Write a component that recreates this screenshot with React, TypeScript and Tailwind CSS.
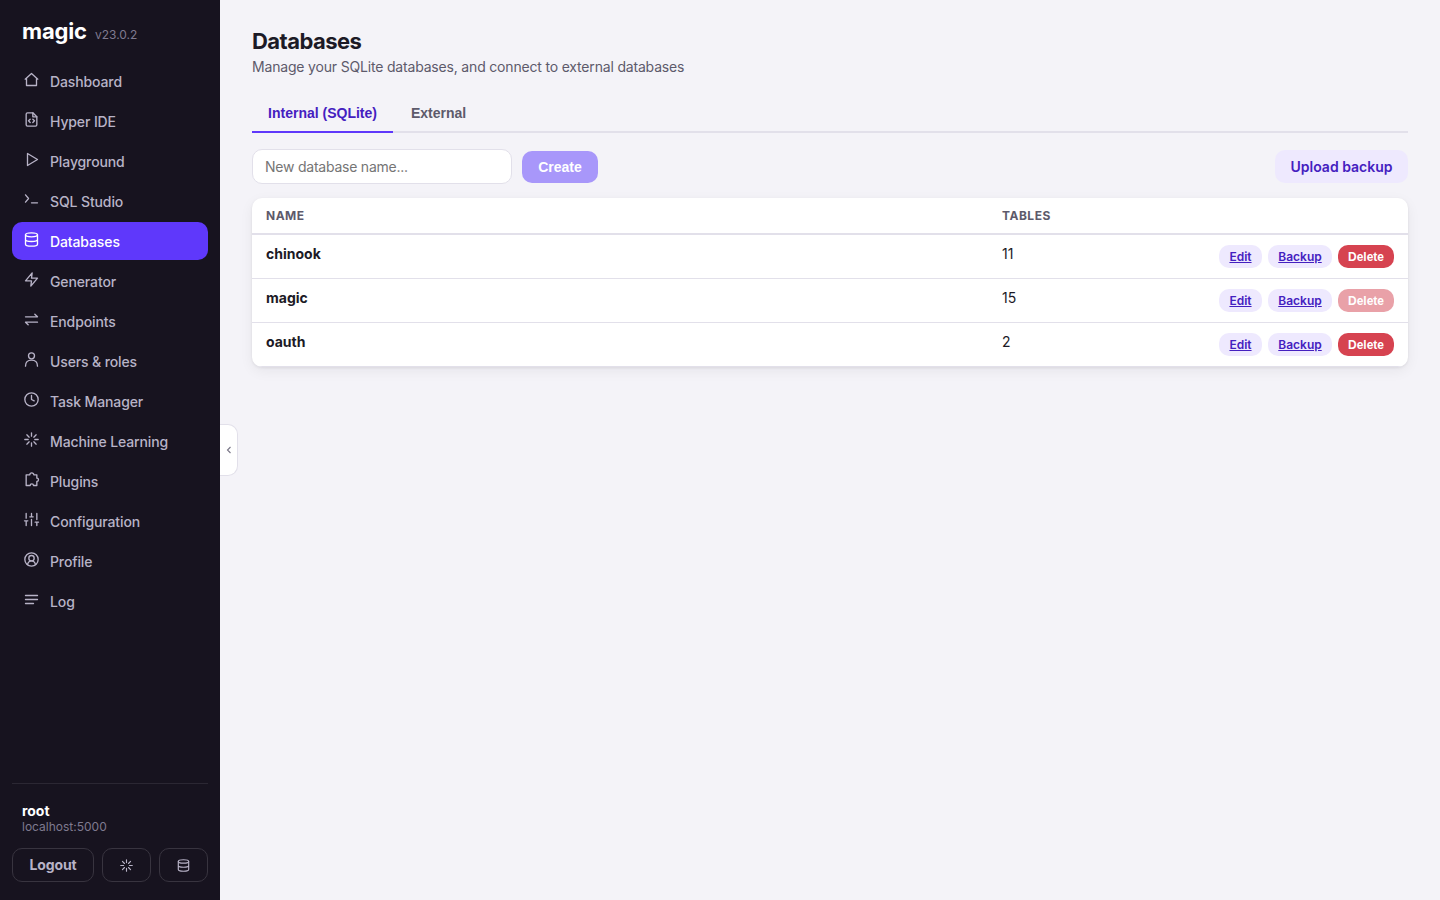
import React from 'react';
import clsx from 'clsx';

interface IconProps {
  name: string;
  size?: number;
}

const paths: Record<string, React.ReactNode> = {
  dashboard: <path d="M2.500 11.500 12 3l9.500 8.500M4.500 10v11h15V10" />,
  ide: (
    <>
      <path d="M14 2H6a2 2 0 0 0-2 2v16a2 2 0 0 0 2 2h12a2 2 0 0 0 2-2V8z" />
      <path d="M14 2v6h6M10 11.500l-2.500 2.500 2.500 2.500M14 11.500l2.500 2.500-2.500 2.500" />
    </>
  ),
  play: <path d="M6 3v18l15-9z" />,
  sql: <path d="m3 5 4.500 5.500L3 16M12 17h9" />,
  database: (
    <>
      <ellipse cx="12" cy="5" rx="9" ry="3" />
      <path d="M3 5v14c0 1.700 4 3 9 3s9-1.300 9-3V5M3 12c0 1.700 4 3 9 3s9-1.300 9-3" />
    </>
  ),
  generator: <path d="M13 2 3 14h9l-1 8 10-12h-9z" />,
  endpoints: <path d="M3 8h18l-4-4M21 16H3l4 4" />,
  users: (
    <>
      <circle cx="12" cy="6.500" r="4.500" />
      <path d="M3 22c0-6 3.500-9 9-9s9 3 9 9" />
    </>
  ),
  clock: (
    <>
      <circle cx="12" cy="12" r="10" />
      <path d="M12 6v6l4 2" />
    </>
  ),
  ml: <path d="M12 2v5M12 17v5M2 12h5M17 12h5M5 5l3.500 3.500M15.500 15.500 19 19M5 19l3.500-3.500M15.500 8.500 19 5" />,
  plugins: (
    <path d="M4 5h5.500a3 3 0 0 1 6 0H20v5a2.500 2.500 0 0 1 0 5v6h-5a2.500 2.500 0 0 0-5 0H4z" />
  ),
  config: <path d="M4 21v-7M4 10V3M12 21v-9M12 8V3M20 21v-5M20 12V3M1.500 14h5M9.500 8h5M17.500 16h5" />,
  profile: (
    <>
      <circle cx="12" cy="12" r="10" />
      <circle cx="12" cy="10" r="4" />
      <path d="M6 19.500c1-3.500 3-5.500 6-5.500s5 2 6 5.500" />
    </>
  ),
  log: <path d="M3 6h18M3 12h18M3 18h12" />,
};

const Icon: React.FC<IconProps> = ({ name, size = 15 }) => (
  <svg
    width={size}
    height={size}
    viewBox="0.75 0.75 22.5 22.5"
    fill="none"
    stroke="currentColor"
    strokeWidth="2"
    strokeLinecap="round"
    strokeLinejoin="round"
    className="shrink-0 overflow-visible"
  >
    {paths[name]}
  </svg>
);

const navItems = [
  { icon: 'dashboard', label: 'Dashboard' },
  { icon: 'ide', label: 'Hyper IDE' },
  { icon: 'play', label: 'Playground' },
  { icon: 'sql', label: 'SQL Studio' },
  { icon: 'database', label: 'Databases' },
  { icon: 'generator', label: 'Generator' },
  { icon: 'endpoints', label: 'Endpoints' },
  { icon: 'users', label: 'Users & roles' },
  { icon: 'clock', label: 'Task Manager' },
  { icon: 'ml', label: 'Machine Learning' },
  { icon: 'plugins', label: 'Plugins' },
  { icon: 'config', label: 'Configuration' },
  { icon: 'profile', label: 'Profile' },
  { icon: 'log', label: 'Log' },
];

const databases = [
  { name: 'chinook', tables: 11, locked: false },
  { name: 'magic', tables: 15, locked: true },
  { name: 'oauth', tables: 2, locked: false },
];

const Sidebar: React.FC = () => (
  <aside className="relative flex w-[220px] shrink-0 flex-col bg-[#17131f] px-3 pb-[18px]">
    <div className="flex items-baseline gap-2 px-2.5 pt-[15px]">
      <span className="text-[22px] leading-8 font-bold tracking-[-0.15px] text-white">magic</span>
      <span className="text-xs text-[#7f7a8f]">v23.0.2</span>
    </div>

    <nav className="mt-[15px] flex flex-col gap-0.5">
      {navItems.map((item) => (
        <a
          key={item.label}
          href="#"
          className={clsx(
            'flex h-[38px] items-center gap-[11px] rounded-[10px] pl-3 text-sm font-medium tracking-[-0.12px]',
            item.label === 'Databases' ? 'bg-[#5f38fb] text-white' : 'text-[#b8b3c7]'
          )}
        >
          <span className="-mt-[3px] flex">
            <Icon name={item.icon} />
          </span>
          <span className="pt-px">{item.label}</span>
        </a>
      ))}
    </nav>

    {/* Current user */}
    <div className="mt-auto border-t border-[#2b2733] pt-[18px]">
      <div className="px-2.5">
        <p className="text-sm leading-[18px] font-bold tracking-[-0.05px] text-white">root</p>
        <p className="text-xs leading-[14px] text-[#7f7a8f]">localhost:5000</p>
      </div>
      <div className="mt-[14px] flex gap-2 text-[#b8b3c7]">
        <button className="h-[34px] w-[82px] rounded-[10px] border border-[#38343f] text-sm font-bold tracking-[-0.1px]">
          Logout
        </button>
        <button className="flex h-[34px] w-[49px] items-center justify-center rounded-[10px] border border-[#38343f] pt-px">
          <Icon name="ml" size={13} />
        </button>
        <button className="flex h-[34px] w-[49px] items-center justify-center rounded-[10px] border border-[#38343f] pt-px">
          <Icon name="database" size={13} />
        </button>
      </div>
    </div>

    {/* Collapse handle */}
    <button className="absolute top-[424px] left-[220px] flex h-[52px] w-[18px] items-center justify-center rounded-r-[10px] border border-l-0 border-[#e2e0ea] bg-white text-[#777485]">
      <svg width="6" height="8" viewBox="0 0 6 8" fill="none" stroke="currentColor" strokeWidth="1.1">
        <path d="M4.500 1 1.500 4l3 3" />
      </svg>
    </button>
  </aside>
);

const App: React.FC = () => {
  return (
    <div className="flex h-screen bg-[#f4f3f8] font-[Inter,sans-serif] text-[#1c1a26]">
      <Sidebar />

      <main className="flex-1 px-8 pt-[26px]">
        <h1 className="text-[22px] leading-[30px] font-bold tracking-[-0.55px]">Databases</h1>
        <p className="text-sm leading-[22px] tracking-[-0.18px] text-[#5d5a6b]">
          Manage your SQLite databases, and connect to external databases
        </p>

        {/* Tabs */}
        <div className="mt-4 flex h-[39px] gap-0.5 border-b-2 border-[#e2e0ea] font-['Liberation_Sans',sans-serif] text-sm font-bold">
          <button className="-mb-0.5 h-[39px] w-[141px] border-b-2 border-[#5f38fb] text-[#4420c0]">
            Internal (SQLite)
          </button>
          <button className="-mb-0.5 h-[39px] border-b-2 border-transparent px-4 text-[#5d5a6b]">External</button>
        </div>

        <div className="mt-4 flex h-[35px] items-center">
          <input
            className="h-[35px] w-[260px] rounded-[10px] border border-[#e2e0ea] bg-white px-3 text-sm tracking-[-0.23px] placeholder:text-[#757575]"
            placeholder="New database name..."
          />
          <button className="ml-2.5 h-8 w-[76px] rounded-[10px] bg-[#a897fa] font-['Liberation_Sans',sans-serif] text-sm font-bold text-white">
            Create
          </button>
          <button className="ml-auto h-[33px] w-[133px] rounded-[10px] bg-[#eee9fe] text-sm font-semibold text-[#4420c0]">
            Upload backup
          </button>
        </div>

        {/* Database list */}
        <div className="mt-[14px] overflow-hidden rounded-[10px] bg-white shadow-[0_1px_3px_rgba(23,19,31,0.08),0_4px_14px_rgba(23,19,31,0.06)]">
          <div className="flex h-[37px] items-center border-b-2 border-[#e2e0ea] px-3.5 text-xs font-bold tracking-[0.5px] text-[#5d5a6b]">
            <span className="w-[736px]">NAME</span>
            <span>TABLES</span>
          </div>
          {databases.map((db) => (
            <div key={db.name} className="flex h-11 items-start border-b border-[#e2e0ea] px-3.5 pt-2.5 text-sm">
              <span className="w-[736px] leading-[17px] font-bold">{db.name}</span>
              <span className="leading-[17px]">{db.tables}</span>
              <div className="ml-auto flex gap-1.5 text-xs font-semibold">
                <button className="h-[23px] w-[43px] rounded-[10px] bg-[#eee9fe] text-[#4420c0] underline">Edit</button>
                <button className="h-[23px] w-16 rounded-[10px] bg-[#eee9fe] text-[#4420c0] underline">Backup</button>
                <button
                  disabled={db.locked}
                  className={clsx(
                    "h-[23px] w-14 rounded-[10px] font-['Liberation_Sans',sans-serif] font-bold text-white",
                    db.locked ? 'bg-[#e9a1a8]' : 'bg-[#d64350]'
                  )}
                >
                  Delete
                </button>
              </div>
            </div>
          ))}
        </div>
      </main>
    </div>
  );
};

export default App;
